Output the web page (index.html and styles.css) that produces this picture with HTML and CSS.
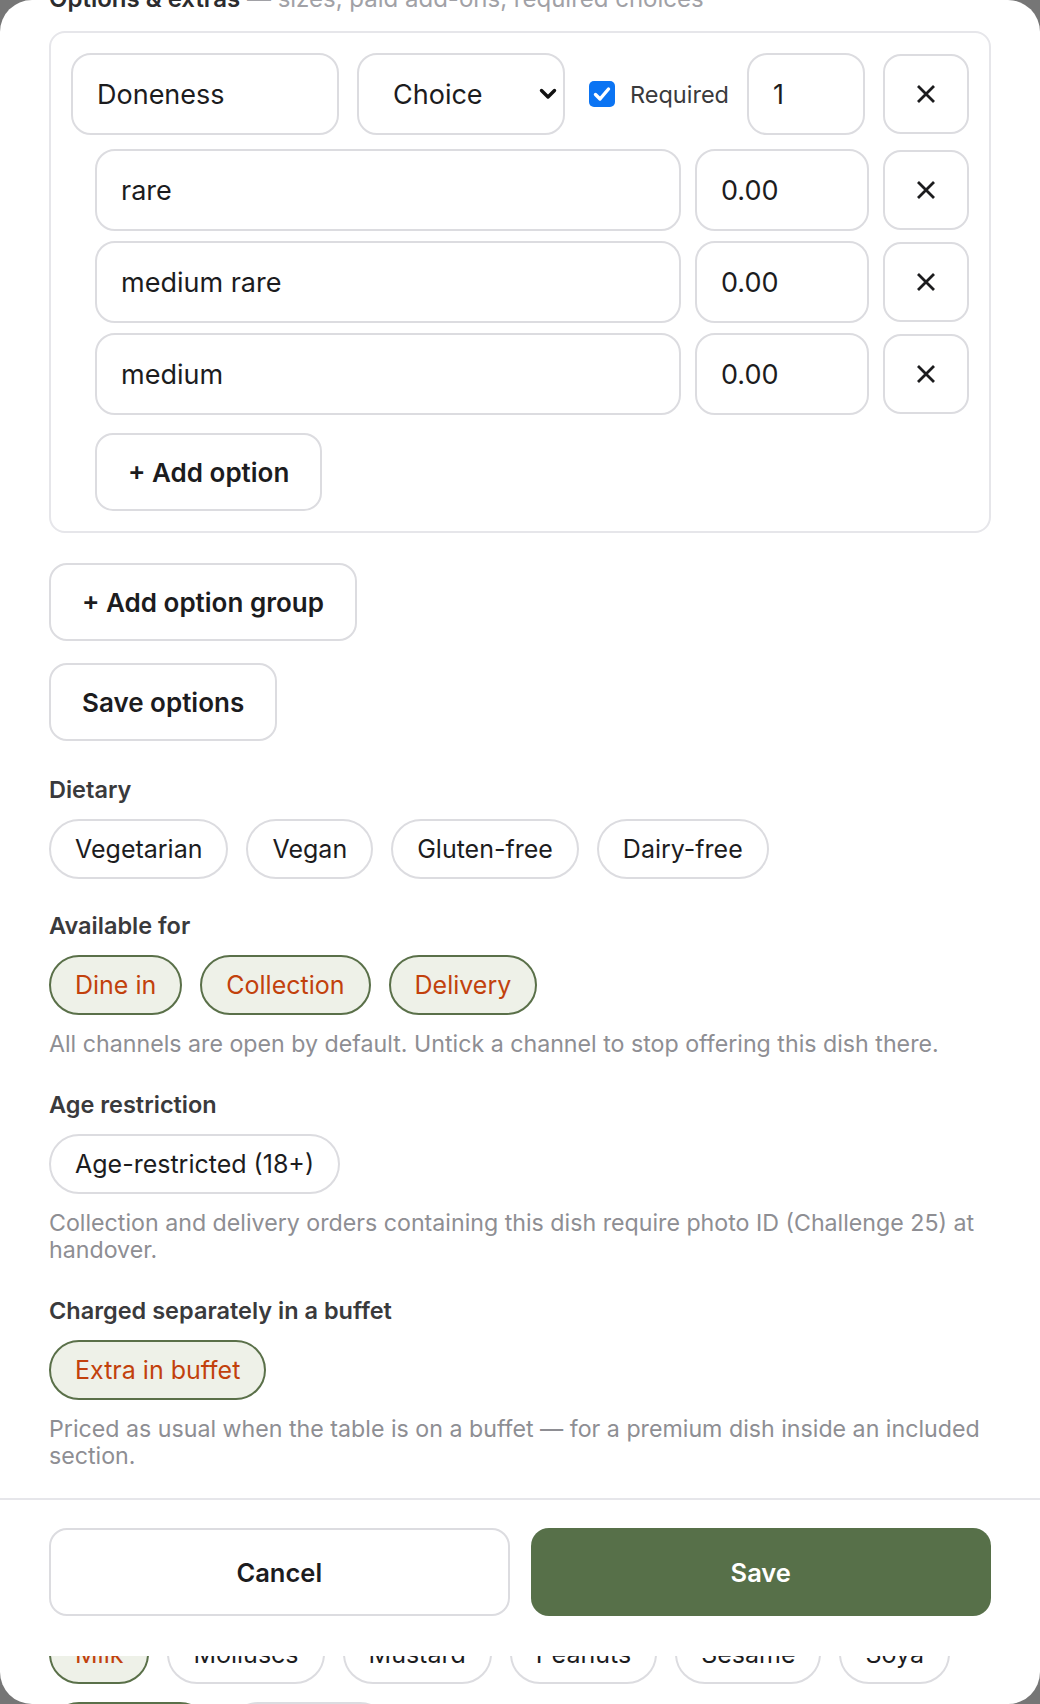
FILE: index.html
```html
<!DOCTYPE html>
<html lang="en">
<head>
<meta charset="utf-8">
<title>Edit dish</title>
<link rel="stylesheet" href="styles.css">
</head>
<body>
<div class="sheet">
  <div class="scroll">
    <h2 class="section-title"><strong>Options &amp; extras</strong> — sizes, paid add-ons, required choices</h2>

    <div class="group">
      <div class="group-head">
        <input class="field name" type="text" value="Doneness">
        <div class="select-wrap">
          <select class="field select"><option>Choice</option></select>
          <svg class="chev" width="18" height="12" viewBox="0 0 18 12" aria-hidden="true"><path d="M2.5 2.5 L9 9 L15.5 2.5" fill="none" stroke="#111" stroke-width="3.4" stroke-linecap="round" stroke-linejoin="round"/></svg>
        </div>
        <label class="req">
          <span class="box"><svg width="26" height="26" viewBox="0 0 26 26" aria-hidden="true"><path d="M6.5 13.5 L11 18 L19.5 8" fill="none" stroke="#fff" stroke-width="3.4" stroke-linecap="round" stroke-linejoin="round"/></svg></span>
          Required
        </label>
        <input class="field qty" type="text" value="1">
        <button class="icon-btn" type="button" aria-label="Remove group"><svg width="20" height="20" viewBox="0 0 20 20"><path d="M2 2 L18 18 M18 2 L2 18" stroke="#1c1c1e" stroke-width="2.8"/></svg></button>
      </div>

      <div class="opts">
        <div class="opt-row">
          <input class="field opt-name" type="text" value="rare">
          <input class="field price" type="text" value="0.00">
          <button class="icon-btn" type="button" aria-label="Remove option"><svg width="20" height="20" viewBox="0 0 20 20"><path d="M2 2 L18 18 M18 2 L2 18" stroke="#1c1c1e" stroke-width="2.8"/></svg></button>
        </div>
        <div class="opt-row">
          <input class="field opt-name" type="text" value="medium rare">
          <input class="field price" type="text" value="0.00">
          <button class="icon-btn" type="button" aria-label="Remove option"><svg width="20" height="20" viewBox="0 0 20 20"><path d="M2 2 L18 18 M18 2 L2 18" stroke="#1c1c1e" stroke-width="2.8"/></svg></button>
        </div>
        <div class="opt-row">
          <input class="field opt-name" type="text" value="medium">
          <input class="field price" type="text" value="0.00">
          <button class="icon-btn" type="button" aria-label="Remove option"><svg width="20" height="20" viewBox="0 0 20 20"><path d="M2 2 L18 18 M18 2 L2 18" stroke="#1c1c1e" stroke-width="2.8"/></svg></button>
        </div>
        <button class="btn add-opt" type="button">+ Add option</button>
      </div>
    </div>

    <button class="btn add-group" type="button">+ Add option group</button>
    <button class="btn save-opts" type="button">Save options</button>

    <section class="block first">
      <div class="label">Dietary</div>
      <div class="chips">
        <span class="chip">Vegetarian</span>
        <span class="chip">Vegan</span>
        <span class="chip">Gluten-free</span>
        <span class="chip">Dairy-free</span>
      </div>
    </section>

    <section class="block">
      <div class="label">Available for</div>
      <div class="chips">
        <span class="chip on">Dine in</span>
        <span class="chip on">Collection</span>
        <span class="chip on">Delivery</span>
      </div>
      <p class="help">All channels are open by default. Untick a channel to stop offering this dish there.</p>
    </section>

    <section class="block">
      <div class="label">Age restriction</div>
      <div class="chips">
        <span class="chip">Age-restricted (18+)</span>
      </div>
      <p class="help">Collection and delivery orders containing this dish require photo ID (Challenge 25) at handover.</p>
    </section>

    <section class="block">
      <div class="label">Charged separately in a buffet</div>
      <div class="chips">
        <span class="chip on">Extra in buffet</span>
      </div>
      <p class="help">Priced as usual when the table is on a buffet — for a premium dish inside an included section.</p>
    </section>
  </div>

  <footer class="actions">
    <button class="act cancel" type="button">Cancel</button>
    <button class="act save" type="button">Save</button>
  </footer>

  <div class="peek">
    <div class="chips peek-chips">
      <span class="chip on">Milk</span>
      <span class="chip">Molluscs</span>
      <span class="chip">Mustard</span>
      <span class="chip">Peanuts</span>
      <span class="chip">Sesame</span>
      <span class="chip">Soya</span>
      <span class="chip on">Sulphites</span>
      <span class="chip">Tree nuts</span>
    </div>
  </div>
</div>
</body>
</html>
```

FILE: styles.css
```css
* { box-sizing: border-box; }

html, body {
  margin: 0;
  padding: 0;
}

body {
  background: #767676;
  font-family: Inter, "Noto Sans", "Liberation Sans", sans-serif;
  color: #1c1c1e;
}

.sheet {
  width: 1040px;
  height: 1704px;
  background: #ffffff;
  border-radius: 32px;
  overflow: hidden;
  display: flex;
  flex-direction: column;
}

.scroll {
  flex: none;
  margin-top: -18px;
  padding: 0 49px 28px;
  display: flex;
  flex-direction: column;
  align-items: flex-start;
}

.section-title {
  margin: 0 0 15px;
  font-size: 24px;
  line-height: 34px;
  font-weight: 400;
  color: #a1a1a6;
  white-space: nowrap;
}

.section-title strong {
  font-weight: 600;
  color: #2c2c2e;
}

/* option group card */
.group {
  align-self: stretch;
  border: 2px solid #e6e6ea;
  border-radius: 16px;
  padding: 20px;
}

.field {
  height: 82px;
  border: 2px solid #dcdce0;
  border-radius: 20px;
  padding: 0 24px;
  font-family: inherit;
  font-size: 27px;
  color: #1c1c1e;
  background: #ffffff;
  outline: none;
}

.group-head {
  display: flex;
  align-items: center;
  gap: 18px;
}

.name { width: 268px; }

.select-wrap {
  position: relative;
  width: 208px;
}

.select {
  width: 100%;
  appearance: none;
  -webkit-appearance: none;
  padding-left: 34px;
}

.chev {
  position: absolute;
  right: 8px;
  top: 50%;
  transform: translateY(-50%);
  pointer-events: none;
}

.req {
  display: flex;
  align-items: center;
  gap: 15px;
  margin: 0 0 0 6px;
  font-size: 23.5px;
  color: #3a3a3c;
}

.box {
  width: 26px;
  height: 26px;
  border-radius: 5px;
  background: #0b74f3;
  display: block;
}

.box svg { display: block; }

.qty { width: 118px; }

.icon-btn {
  flex: none;
  width: 86px;
  height: 80px;
  border: 2px solid #dcdce0;
  border-radius: 18px;
  background: #ffffff;
  display: grid;
  place-items: center;
  padding: 0;
}

.opts {
  margin: 14px 0 0 24px;
  display: flex;
  flex-direction: column;
  align-items: flex-start;
  gap: 10px;
}

.opt-row {
  align-self: stretch;
  display: flex;
  align-items: center;
  gap: 14px;
}

.opt-name {
  flex: 1;
  min-width: 0;
}

.price { width: 174px; }

/* buttons */
.btn {
  height: 78px;
  border: 2px solid #dcdce0;
  border-radius: 18px;
  background: #ffffff;
  padding: 0 31px;
  font-family: inherit;
  font-size: 26px;
  font-weight: 600;
  color: #1c1c1e;
}

.add-opt { margin-top: 8px; }
.add-group { margin-top: 30px; }
.save-opts { margin-top: 22px; }

/* field blocks */
.block {
  margin-top: 32px;
  align-self: stretch;
}

.block.first { margin-top: 34px; }

.label {
  font-size: 23.5px;
  line-height: 30px;
  font-weight: 600;
  color: #3a3a3c;
  margin-bottom: 14px;
}

.chips {
  display: flex;
  flex-wrap: wrap;
  gap: 18px;
}

.chip {
  height: 60px;
  padding: 0 24px;
  border: 2px solid #dcdce0;
  border-radius: 999px;
  background: #ffffff;
  display: inline-flex;
  align-items: center;
  font-size: 25px;
  color: #1c1c1e;
  white-space: nowrap;
}

.chip.on {
  background: #eef1e8;
  border-color: #5a7049;
  color: #c2410c;
}

.help {
  margin: 16px 0 0;
  font-size: 23.2px;
  line-height: 27px;
  color: #8e8e93;
}

/* footer actions */
.actions {
  flex: none;
  border-top: 2px solid #e6e6ea;
  padding: 28px 49px 40px;
  display: grid;
  grid-template-columns: 1fr 1fr;
  gap: 21px;
  background: #ffffff;
}

.act {
  height: 88px;
  border-radius: 18px;
  font-family: inherit;
  font-size: 25.5px;
  font-weight: 600;
}

.cancel {
  border: 2px solid #dcdce0;
  background: #ffffff;
  color: #1c1c1e;
}

.save {
  border: none;
  background: #577049;
  color: #ffffff;
}

.peek {
  flex: none;
  height: 48px;
  overflow: hidden;
  padding: 0 49px;
}

.peek-chips {
  margin-top: -32px;
}
```
